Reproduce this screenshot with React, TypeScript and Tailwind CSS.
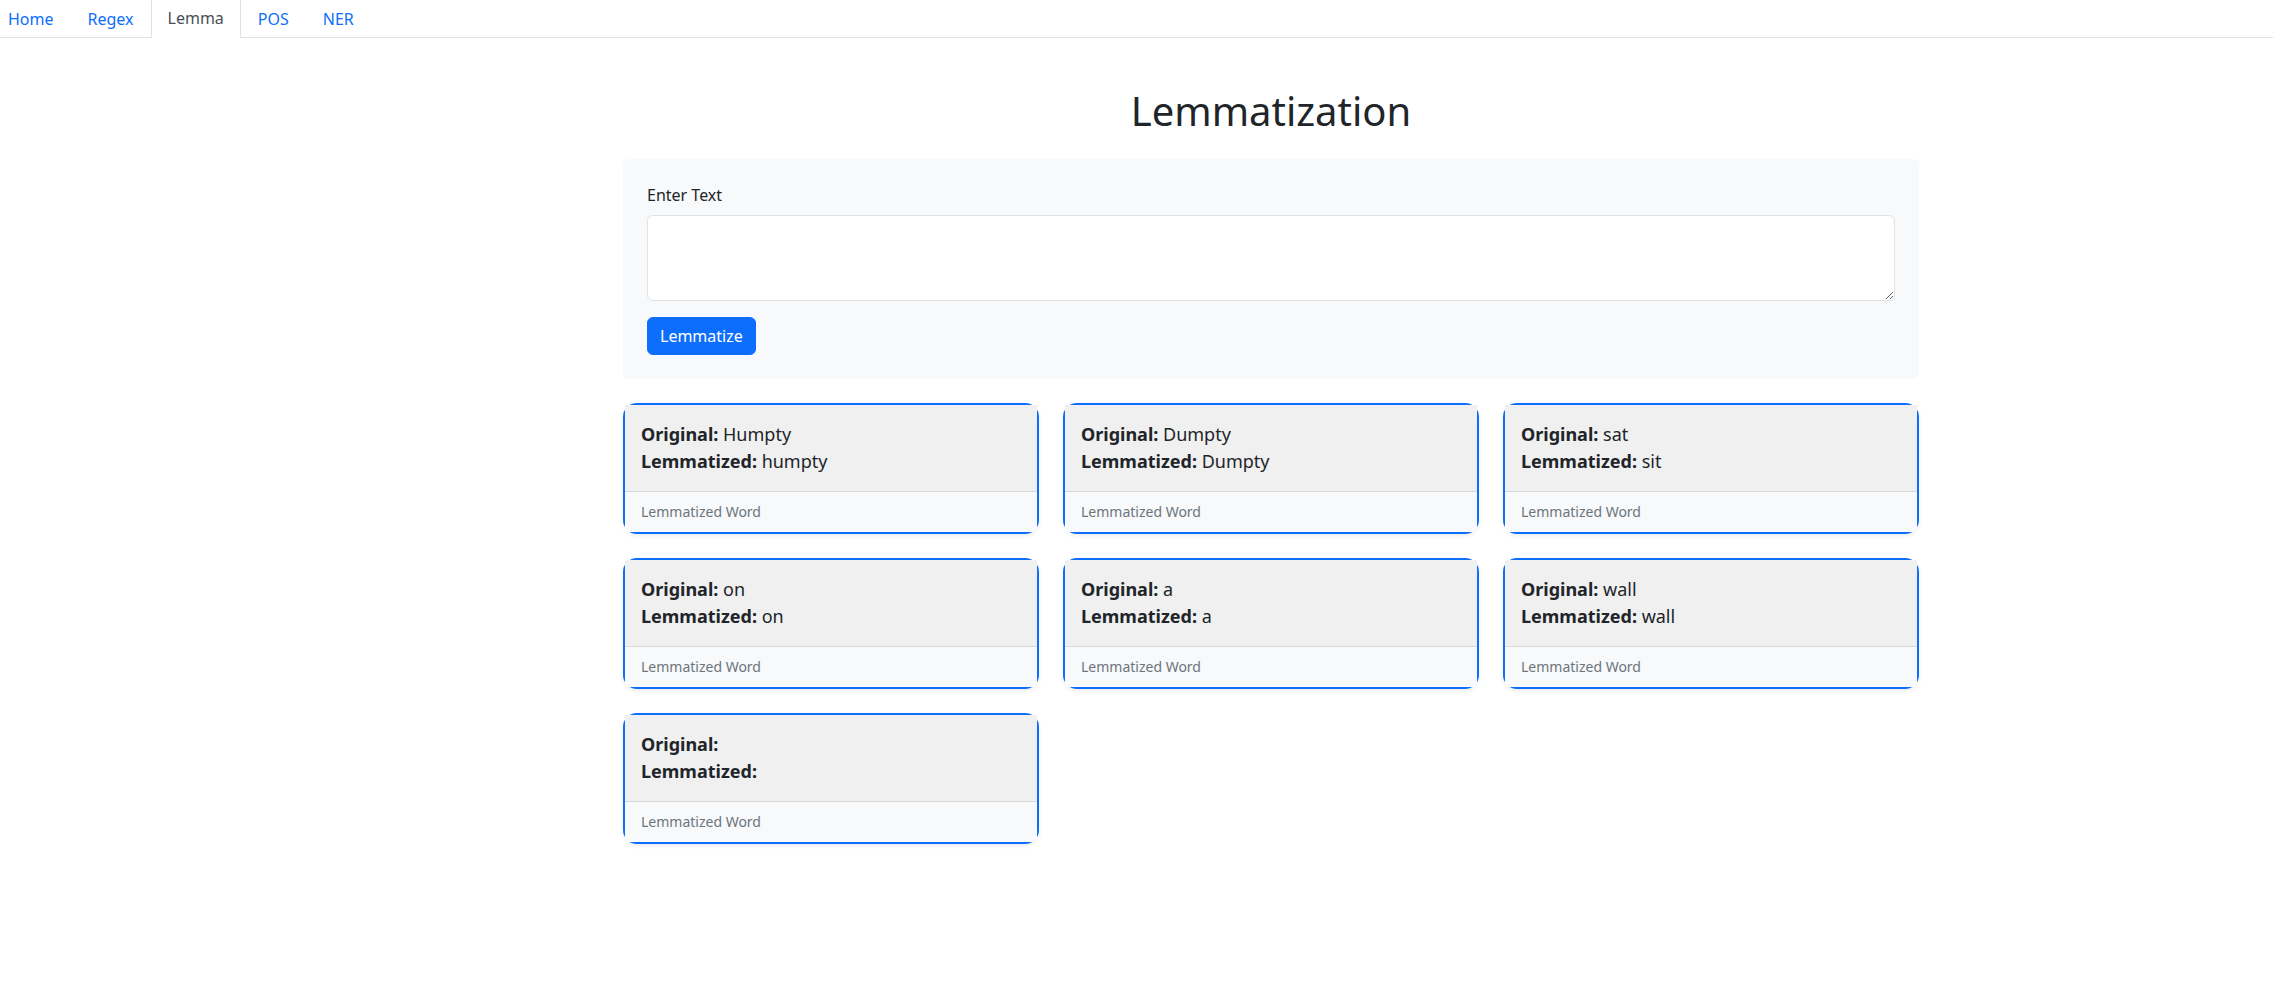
const tabs = ["Home", "Regex", "Lemma", "POS", "NER"];

const words = [
	{ original: "Humpty", lemma: "humpty" },
	{ original: "Dumpty", lemma: "Dumpty" },
	{ original: "sat", lemma: "sit" },
	{ original: "on", lemma: "on" },
	{ original: "a", lemma: "a" },
	{ original: "wall", lemma: "wall" },
	{ original: "", lemma: "" },
];

function WordCard({ original, lemma }: { original: string; lemma: string }) {
	return (
		<div className="rounded-[14px] border-2 border-[#0d6efd] shadow-[0_2px_4px_rgba(0,0,0,0.075)]">
			<div className="bg-[#f0f0f0] px-4 py-4 text-[18px] leading-[27px] text-[#212529]">
				<div>
					<span className="font-bold">Original:</span> {original}
				</div>
				<div>
					<span className="font-bold">Lemmatized:</span> {lemma}
				</div>
			</div>
			<div className="border-t border-[#d9d9d9] bg-[#f8f9fa] px-4 pt-[9px] pb-[10px] text-sm leading-[21px] text-[#6c757d]">
				Lemmatized Word
			</div>
		</div>
	);
}

export default function App() {
	return (
		<div className="min-h-screen bg-white font-['Noto_Sans',sans-serif] text-[#212529]">
			<nav className="flex border-b border-[#dee2e6]">
				<div className="-ml-[9px] flex">
					{tabs.map((tab) => {
						const active = tab === "Lemma";
						return (
							<a
								key={tab}
								href="#"
								className={
									active
										? "-mb-px border border-t-0 border-[#dee2e6] border-b-white bg-white px-4 py-[6px] text-base leading-6 text-[#495057]"
										: "-mb-px border border-transparent px-4 py-[6px] text-base leading-6 text-[#0d6efd]"
								}
							>
								{tab}
							</a>
						);
					})}
				</div>
			</nav>

			<main className="ml-[623px] w-[1296px]">
				<h1 className="mt-[49px] mb-6 text-center text-[40px] font-normal leading-[1.2]">Lemmatization</h1>

				<div className="rounded-md bg-[#f8f9fa] p-6">
					<label className="mb-2 block text-base leading-6">Enter Text</label>
					<textarea
						rows={3}
						className="mb-4 block h-[86px] w-full rounded-md border border-[#dee2e6] bg-white px-3 py-1.5 text-base leading-6"
					/>
					<button className="rounded-md border border-[#0d6efd] bg-[#0d6efd] px-3 py-1.5 text-base leading-6 text-white">
						Lemmatize
					</button>
				</div>

				<div className="mt-6 grid grid-cols-3 gap-6">
					{words.map((w, i) => (
						<WordCard key={i} original={w.original} lemma={w.lemma} />
					))}
				</div>
			</main>
		</div>
	);
}
